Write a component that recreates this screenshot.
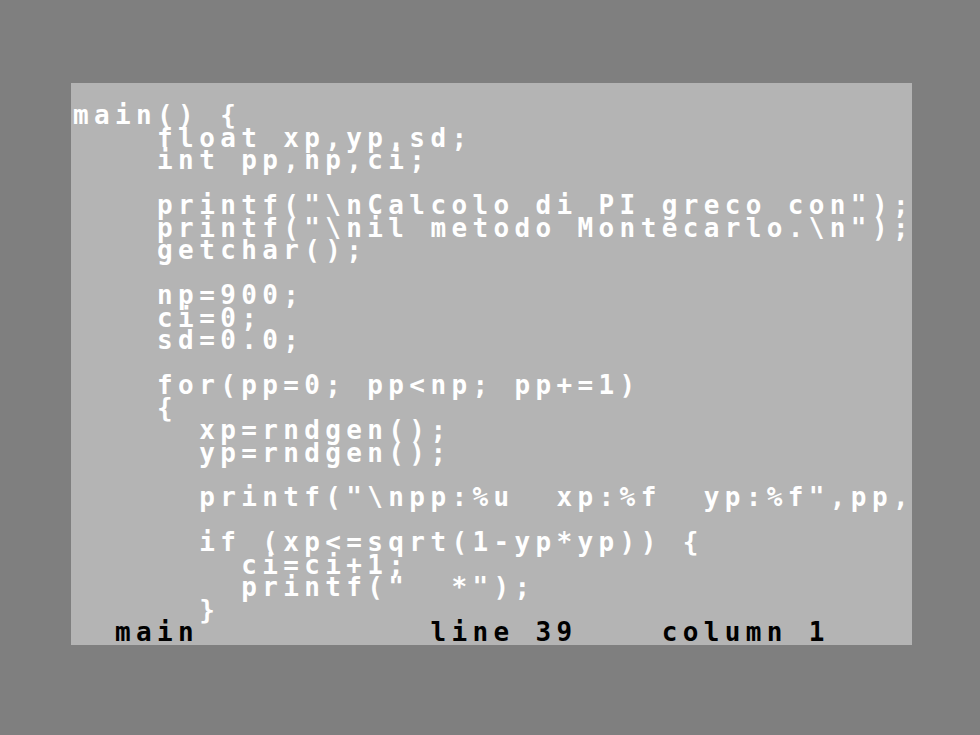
import * as React from 'react';

// editor screen: 40 columns x 25 rows, one row = 22.48px, one column = 21.02px
const codeLines: string[] = [
  '',
  'main() {',
  '    float xp,yp,sd;',
  '    int pp,np,ci;',
  '',
  '    printf("\\nCalcolo di PI greco con");',
  '    printf("\\nil metodo Montecarlo.\\n");',
  '    getchar();',
  '',
  '    np=900;',
  '    ci=0;',
  '    sd=0.0;',
  '',
  '    for(pp=0; pp<np; pp+=1)',
  '    {',
  '      xp=rndgen();',
  '      yp=rndgen();',
  '',
  '      printf("\\npp:%u  xp:%f  yp:%f",pp,',
  '',
  '      if (xp<=sqrt(1-yp*yp)) {',
  '        ci=ci+1;',
  '        printf("  *");',
  '      }',
];

const statusLine = '  main           line 39    column 1';

const App: React.FC = () => {
  return (
    <div className="w-full h-[735px] bg-[#7f7f7f] pt-[83px] pl-[71px]">
      <div
        className="w-[841px] h-[562px] bg-[#b4b4b4] overflow-hidden pl-[2px] font-bold text-[26px] tracking-[5.37px]"
        style={{ fontFamily: '"DejaVu Sans Mono", "Liberation Mono", monospace' }}
      >
        {codeLines.map((line, i) => (
          <div key={i} className="h-[22.48px] leading-[21px] whitespace-pre text-white">
            {line}
          </div>
        ))}
        <div className="h-[22.48px] leading-[21px] whitespace-pre text-black">{statusLine}</div>
      </div>
    </div>
  );
};

export default App;
